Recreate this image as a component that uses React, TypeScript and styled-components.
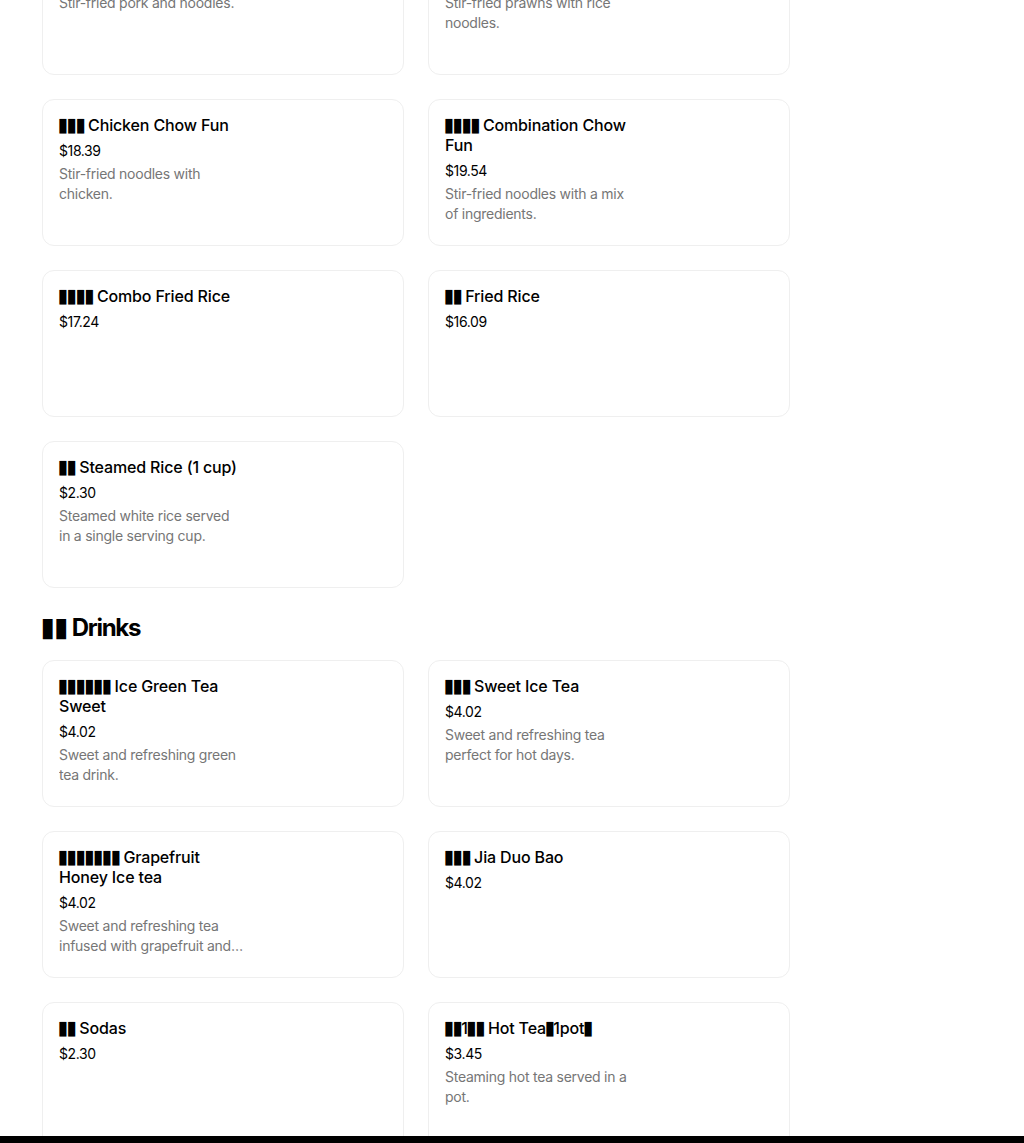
import styled, { createGlobalStyle } from 'styled-components';

const GlobalStyle = createGlobalStyle`
  html, body {
    margin: 0;
    padding: 0;
    background: #ffffff;
    overflow: hidden;
  }
  body {
    font-family: Inter, "Liberation Sans", "DejaVu Sans", sans-serif;
    color: #000000;
  }
`;

type Item = { name: string; price: string; desc?: string };
type Section = { title?: string; items: Item[] };

const sections: Section[] = [
  {
    items: [
      { name: '▮▮▮▮ Pork Chow Mein', price: '$17.24', desc: 'Stir-fried pork and noodles.' },
      { name: '▮▮▮ Prawn Chow Fun', price: '$19.54', desc: 'Stir-fried prawns with rice noodles.' },
      { name: '▮▮▮ Chicken Chow Fun', price: '$18.39', desc: 'Stir-fried noodles with chicken.' },
      { name: '▮▮▮▮ Combination Chow Fun', price: '$19.54', desc: 'Stir-fried noodles with a mix of ingredients.' },
      { name: '▮▮▮▮ Combo Fried Rice', price: '$17.24' },
      { name: '▮▮ Fried Rice', price: '$16.09' },
      { name: '▮▮ Steamed Rice (1 cup)', price: '$2.30', desc: 'Steamed white rice served in a single serving cup.' },
    ],
  },
  {
    title: '▮▮ Drinks',
    items: [
      { name: '▮▮▮▮▮▮ Ice Green Tea Sweet', price: '$4.02', desc: 'Sweet and refreshing green tea drink.' },
      { name: '▮▮▮ Sweet Ice Tea', price: '$4.02', desc: 'Sweet and refreshing tea perfect for hot days.' },
      { name: '▮▮▮▮▮▮▮ Grapefruit Honey Ice tea', price: '$4.02', desc: 'Sweet and refreshing tea infused with grapefruit and honey.' },
      { name: '▮▮▮ Jia Duo Bao', price: '$4.02' },
      { name: '▮▮ Sodas', price: '$2.30' },
      { name: '▮▮1▮▮ Hot Tea▮1pot▮', price: '$3.45', desc: 'Steaming hot tea served in a pot.' },
    ],
  },
];

// missing-glyph boxes, drawn as text
const Tofu = styled.span`
  font-family: "DejaVu Sans", sans-serif;
  font-size: 1.2em;
  line-height: 0;
  letter-spacing: -0.09em;
  margin-left: -0.08em;
  font-weight: 400;
`;

const Page = styled.main`
  padding: 0 42px;
  margin-top: -72px;
`;

const SectionBlock = styled.section`
  display: flex;
  flex-direction: column;
`;

const SectionTitle = styled.h2`
  margin: 24px 0 16px;
  font-size: 24px;
  line-height: 32px;
  font-weight: 700;
  letter-spacing: -1.3px;

  ${Tofu} {
    font-size: 1.1em;
    letter-spacing: -0.04em;
    margin-left: -0.06em;
  }
`;

const Grid = styled.div`
  display: grid;
  grid-template-columns: repeat(2, 362px);
  gap: 24px;
`;

const Card = styled.div`
  box-sizing: border-box;
  height: 147px;
  border: 1px solid #efefef;
  border-radius: 12px;
  padding: 15px 16px;
  display: flex;
  gap: 16px;
  background: #ffffff;
`;

const Info = styled.div`
  width: 184px;
  display: flex;
  flex-direction: column;
`;

const Name = styled.div`
  font-size: 16px;
  line-height: 20px;
  font-weight: 500;
  letter-spacing: -0.15px;
`;

const Price = styled.div`
  margin-top: 6px;
  font-size: 14px;
  line-height: 20px;
  font-weight: 400;
  letter-spacing: -0.4px;
`;

const Desc = styled.div`
  margin-top: 3px;
  font-size: 14px;
  line-height: 20px;
  color: #767676;
  letter-spacing: -0.25px;
  display: -webkit-box;
  -webkit-line-clamp: 2;
  -webkit-box-orient: vertical;
  overflow: hidden;
`;

const BottomBar = styled.div`
  position: fixed;
  left: 0;
  right: 0;
  bottom: 0;
  height: 7px;
  background: #000000;
`;

const withTofu = (text: string) =>
  text.split(/(▮+)/).map((part, i) =>
    part.startsWith('▮') ? <Tofu key={i}>{part}</Tofu> : part
  );

const MenuCard = ({ item }: { item: Item }) => (
  <Card>
    <Info>
      <Name>{withTofu(item.name)}</Name>
      <Price>{item.price}</Price>
      {item.desc && <Desc>{item.desc}</Desc>}
    </Info>
  </Card>
);

export default function App() {
  return (
    <>
      <GlobalStyle />
      <Page>
        {sections.map((s, i) => (
          <SectionBlock key={i}>
            {s.title && <SectionTitle>{withTofu(s.title)}</SectionTitle>}
            <Grid>
              {s.items.map((item) => (
                <MenuCard key={item.name} item={item} />
              ))}
            </Grid>
          </SectionBlock>
        ))}
      </Page>
      <BottomBar />
    </>
  );
}
